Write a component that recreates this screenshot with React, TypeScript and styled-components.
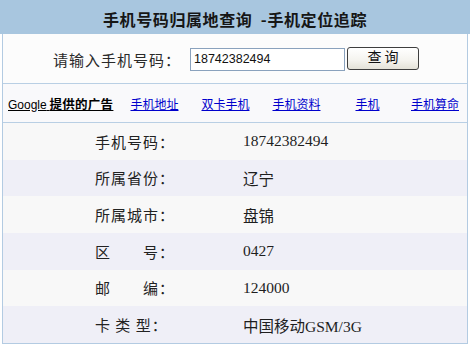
import React from "react";
import styled, { createGlobalStyle } from "styled-components";

const Global = createGlobalStyle`
  html, body { margin: 0; padding: 0; background: #ffffff; }
  body { font-family: "Noto Sans CJK SC", "Liberation Sans", sans-serif; }
`;

const Page = styled.div`
  width: 470px;
`;

const Header = styled.div`
  height: 34px;
  box-sizing: border-box;
  padding-top: 3px;
  background: #a8c6df;
  display: flex;
  align-items: center;
  justify-content: center;
  font-size: 16px;
  font-weight: bold;
  letter-spacing: 0.6px;
  color: #161616;
  white-space: pre;
`;

const Panel = styled.div`
  margin: 0 2px;
  border: 1px solid #b3cbe2;
  border-top: none;
  background: #fbfbfb;
`;

const FormRow = styled.div`
  height: 50px;
  box-sizing: border-box;
  display: flex;
  align-items: center;
  padding-left: 50px;
  padding-top: 1px;
  background: #fcfcfc;
  border-bottom: 1px solid #b9cfe4;
`;

const FormLabel = styled.span`
  font-size: 15px;
  letter-spacing: 1px;
  color: #2a2a2a;
  width: 137px;
`;

const Input = styled.input`
  box-sizing: border-box;
  width: 155px;
  height: 23px;
  border: 1px solid #8aa2bd;
  padding: 0 0 0 3px;
  margin: 0;
  font-family: "Liberation Sans", Arial, sans-serif;
  font-size: 12.5px;
  color: #111;
  background: #fff;
  outline: none;
`;

const Button = styled.button`
  box-sizing: border-box;
  margin: 0 0 0 2px;
  width: 72px;
  height: 23px;
  position: relative;
  top: -1px;
  border: 1px solid #3e3e3e;
  border-radius: 3px;
  background: linear-gradient(#ffffff, #f4f3ee 60%, #e4e2d8);
  font-family: "Noto Sans CJK SC", sans-serif;
  font-size: 14px;
  color: #111;
  padding: 0 0 4px 0;
  line-height: 1;
  white-space: pre;
`;

const AdRow = styled.div`
  height: 39px;
  box-sizing: border-box;
  display: grid;
  grid-template-columns: 116px 71px 71px 71px 71px 1fr;
  align-items: center;
  background: #f9f9fb;
  border-bottom: 1px solid #b9cfe4;
  font-size: 12px;
`;

const AdTitle = styled.a`
  padding-left: 5px;
  color: #000;
  text-decoration: underline;
  white-space: nowrap;
`;

const Latin = styled.span`
  font-family: "Liberation Sans", Arial, sans-serif;
  font-weight: normal;
`;

const Strong = styled.span`
  font-weight: bold;
  font-size: 12.5px;
  letter-spacing: 0.3px;
`;

const AdLink = styled.a`
  text-align: center;
  color: #0000cc;
  text-decoration: underline;
  white-space: nowrap;
`;

const DataRow = styled.div<{ $alt: boolean }>`
  height: 36.67px;
  display: grid;
  grid-template-columns: 240px 1fr;
  align-items: center;
  background: ${(p) => (p.$alt ? "#efeff7" : "#f8f8f8")};
`;

const Label = styled.span`
  padding-left: 92px;
  font-size: 15px;
  letter-spacing: 1px;
  color: #222;
  white-space: pre;
`;

const Value = styled.span`
  font-family: "Liberation Serif", "Noto Sans CJK SC", serif;
  font-size: 15.5px;
  color: #1e1e1e;
`;

const ads = ["手机地址", "双卡手机", "手机资料", "手机", "手机算命"];

const rows: [string, string][] = [
  ["手机号码：", "18742382494"],
  ["所属省份：", "辽宁"],
  ["所属城市：", "盘锦"],
  ["区　　号：", "0427"],
  ["邮　　编：", "124000"],
  ["卡 类 型：", "中国移动GSM/3G"],
];

export default function App() {
  return (
    <Page>
      <Global />
      <Header>{"手机号码归属地查询  -手机定位追踪"}</Header>
      <Panel>
        <FormRow>
          <FormLabel>请输入手机号码：</FormLabel>
          <Input defaultValue="18742382494" />
          <Button>{"查 询"}</Button>
        </FormRow>
        <AdRow>
          <AdTitle>
            <Latin>Google</Latin> <Strong>提供的广告</Strong>
          </AdTitle>
          {ads.map((a) => (
            <AdLink key={a}>{a}</AdLink>
          ))}
        </AdRow>
        {rows.map(([l, v], i) => (
          <DataRow key={l} $alt={i % 2 === 1}>
            <Label>{l}</Label>
            <Value>{v}</Value>
          </DataRow>
        ))}
      </Panel>
    </Page>
  );
}
